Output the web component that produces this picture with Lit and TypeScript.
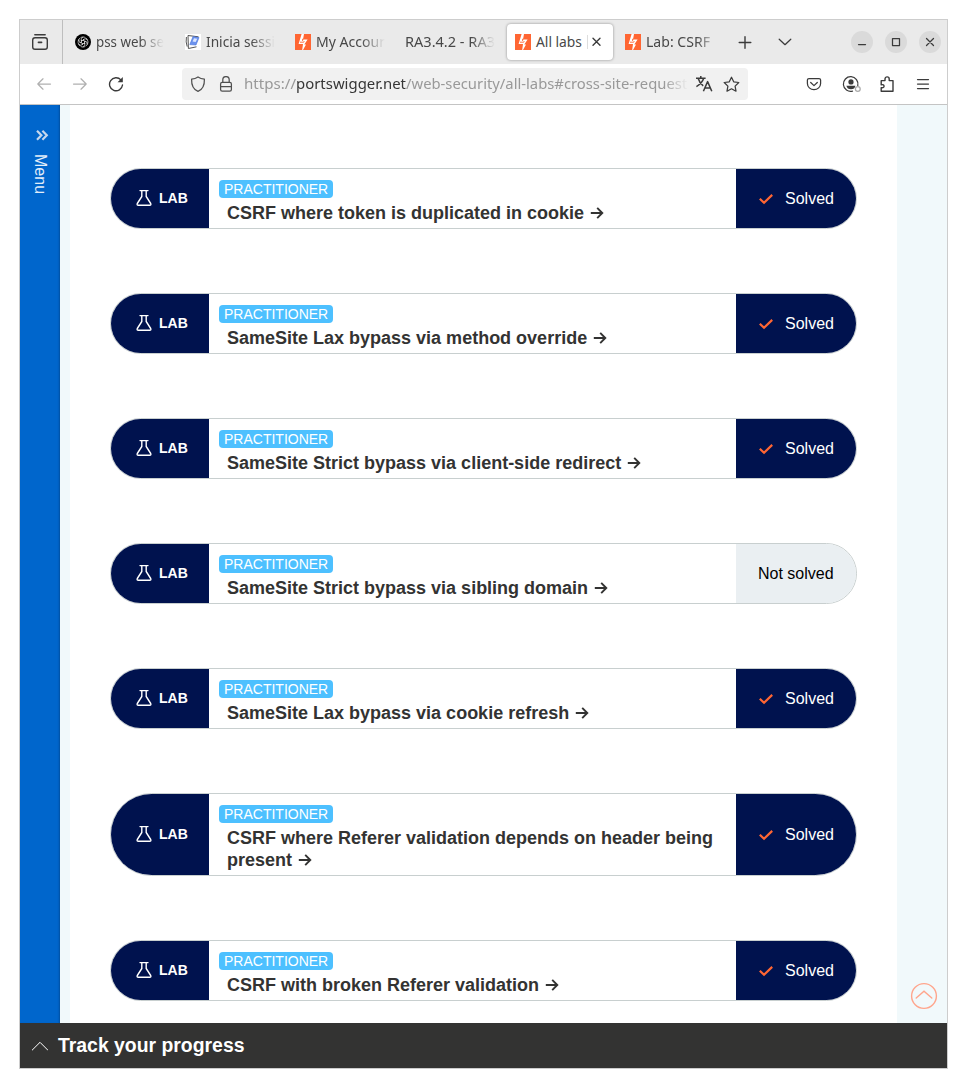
import { LitElement, html, svg, css } from "lit";
import { customElement, property } from "lit/decorators.js";

const bolt = html`<svg width="16" height="16" viewBox="0 0 16 16"><rect width="16" height="16" fill="#ff6633"/><path d="M6.6 0H9L8 5.6H12.6L9.3 10.4H11L8 16H7.2L8 9.9H3.6Z" fill="#fff"/><path d="M5 8.2H8.8L9.2 7.1M7.6 7V5H8.6" fill="none" stroke="#ff6633" stroke-width=".9"/></svg>`;

const gpt = html`<svg width="16" height="16" viewBox="0 0 16 16"><circle cx="8" cy="8" r="8" fill="#000"/><g fill="none" stroke="#fff" stroke-width=".65"><circle cx="8" cy="8" r="5" stroke-dasharray="4.6 .64"/>${[0, 60, 120, 180, 240, 300].map(
  (a) => svg`<path transform="rotate(${a} 8 8)" d="M6.2 7V4.4L8.2 3.2M8 6.2 10.6 7.7"/>`
)}</g></svg>`;

const moodle = html`<svg width="16" height="16" viewBox="0 0 16 16"><rect width="16" height="16" fill="#fff"/><path d="M3 1.5 13.5 2.8M3 1.5 3.4 14.5 11.5 12.8M1.4 3Q.5 8 2.2 12.6" fill="none" stroke="#555" stroke-width="1"/><path d="M8 2.6 14 3.6 11 11 4.8 10.6Z" fill="#6c92ee" stroke="#4571d8" stroke-width=".6"/><path d="M9 4.2 12.3 4.8 10.6 8 7.6 7.6Z" fill="#dbe6ff"/></svg>`;

const line = (w: number, h: number, body: unknown, color = "#3b3b3b", sw = 1.25) =>
  html`<svg width=${w} height=${h} viewBox="0 0 ${w} ${h}" fill="none" stroke=${color} stroke-width=${sw} stroke-linecap="round" stroke-linejoin="round">${body}</svg>`;

const label = (text: unknown, w: number, cls = "") =>
  html`<svg class="label ${cls}" width=${w} height="22"><text x="0" y="16" font-size="14.5" textLength=${w} lengthAdjust="spacingAndGlyphs">${text}</text></svg>`;

@customElement("lab-card")
class LabCard extends LitElement {
  @property() name = "";
  @property({ type: Boolean }) solved = false;

  static styles = css`
    :host { display: block; }
    .card { display: flex; border: 1px solid #c8cfcf; border-radius: 42px; overflow: hidden; background: #fff; color: #333332; }
    .kind { width: 98px; flex: none; display: flex; align-items: center; background: #00124e; color: #fff; font-weight: 700; font-size: 14px; box-sizing: border-box; padding: 0 0 2px 25px; gap: 7px; }
    .info { flex: 1; padding: 11px 10px 3px; min-width: 0; }
    .level { display: block; width: max-content; height: 18px; line-height: 18px; padding: 0 5px; border-radius: 4px; background: #4dc0ff; color: #fff; font-size: 14px; }
    .name { padding: 4px 0 0 8px; margin-bottom: 1px; font-size: 18px; line-height: 22px; font-weight: 700; }
    .name svg { vertical-align: -1px; margin-left: 1px; }
    .status { width: 120px; flex: none; box-sizing: border-box; display: flex; align-items: center; font-size: 16px; padding-left: 22px; background: #eaeff2; color: #000; }
    .done { background: #00124e; color: #fff; gap: 11px; }
  `;

  render() {
    return html`<div class="card">
      <div class="kind">
        ${line(16, 18, svg`<path d="M4 1.6H12M5.8 2V7.5L1.3 14.5Q.6 16.3 2.4 16.3H13.6Q15.4 16.3 14.7 14.5L10.2 7.5V2"/>`, "#fff", 1.4)}
        <span>LAB</span>
      </div>
      <div class="info">
        <span class="level">PRACTITIONER</span>
        <div class="name">${this.name} ${line(14, 14, svg`<path stroke-linecap="butt" stroke-linejoin="miter" d="M.8 7H12.2M7.2 1.9 12.3 7 7.2 12.1"/>`, "#333332", 1.9)}</div>
      </div>
      <div class="status ${this.solved ? "done" : ""}">
        ${this.solved ? line(16, 14, svg`<path stroke-linecap="butt" stroke-linejoin="miter" d="M1.8 6.8 6 10.7 14.2 2.9"/>`, "#ff6633", 2.2) : ""}
        <span>${this.solved ? "Solved" : "Not solved"}</span>
      </div>
    </div>`;
  }
}

@customElement("browser-chrome")
class BrowserChrome extends LitElement {
  static styles = css`
    :host { display: block; font-family: "Noto Sans", sans-serif; }
    svg { display: block; flex: none; }
    .tabs { height: 44px; background: #eaeaea; display: flex; align-items: center; }
    .view { width: 43px; height: 44px; border-right: 1px solid #bebebe; display: flex; align-items: center; padding-left: 11px; box-sizing: border-box; }
    .tab { width: 110px; height: 36px; box-sizing: border-box; padding-left: 10px; display: flex; align-items: center; gap: 5px; }
    .first { margin-left: 2px; }
    .active { width: 106px; margin: 0 2px; padding-left: 8px; background: #fff; border-radius: 4px; box-shadow: 0 0 3px rgba(0, 0, 0, 0.4); }
    .label { overflow: visible; fill: #484848; }
    .fade { -webkit-mask-image: linear-gradient(to right, #000 calc(100% - 24px), transparent); mask-image: linear-gradient(to right, #000 calc(100% - 24px), transparent); }
    .soft { -webkit-mask-image: linear-gradient(to right, #000 calc(100% - 14px), #0006); mask-image: linear-gradient(to right, #000 calc(100% - 14px), #0006); }
    .cut { border-left: 1px solid #ddd; height: 14px; }
    .close { margin-left: -2px; }
    .plus { margin-left: 13px; }
    .list { margin-left: 26px; }
    .win { display: flex; gap: 12px; margin-left: auto; padding-right: 6px; }
    .round { width: 22px; height: 22px; border-radius: 50%; background: #dadada; display: grid; place-items: center; }
    .bar { height: 40px; background: #fff; border-bottom: 1px solid #c4c4c4; display: flex; align-items: center; }
    .nav { display: flex; gap: 20px; padding-left: 16px; width: 146px; box-sizing: content-box; }
    .url { width: 566px; height: 32px; border-radius: 4px; background: #f1f1f1; display: flex; align-items: center; box-sizing: border-box; padding-left: 8px; }
    .url .lock { margin-left: 12px; margin-right: 10px; }
    .parts { display: flex; flex: none; width: 444px; overflow: hidden; }
    .parts svg { fill: #999; }
    .parts .host { fill: #363636; }
    .lang { margin-left: 7px; }
    .star { margin-left: 10px; }
    .tools { margin-left: auto; padding-right: 16px; display: flex; gap: 20px; align-items: center; }
    .user { margin-right: -3px; }
  `;

  render() {
    return html`
      <div class="tabs">
        <div class="view">${line(18, 18, svg`<path d="M3.8 1.7H14.2M1.7 7Q1.7 4.7 4 4.7H14Q16.3 4.7 16.3 7V14Q16.3 16.3 14 16.3H4Q1.7 16.3 1.7 14Z"/><path d="M7.4 9.4H10.6" stroke-width="1.6"/>`, "#3b3b3b", 1.4)}</div>
        <div class="tab first">${gpt}<span class="fade">${label("pss web se", 68)}</span></div>
        <div class="tab">${moodle}<span class="fade">${label("Inicia sessi", 69)}</span></div>
        <div class="tab">${bolt}<span class="fade">${label("My Accour", 69)}</span></div>
        <div class="tab"><span class="fade">${label("RA3.4.2 - RA3", 90)}</span></div>
        <div class="tab active">${bolt}${label("All labs", 46)}<span class="cut"></span><span class="close">${line(12, 12, svg`<path d="M2 2.3 9 9.3M9 2.3 2 9.3"/>`, "#3b3b3b", 1.4)}</span></div>
        <div class="tab">${bolt}<span class="soft">${label("Lab: CSRF", 64)}</span></div>
        <span class="plus">${line(14, 14, svg`<path d="M1.2 7.5H12.8M7 1.7V13.3"/>`, "#3b3b3b", 1.4)}</span>
        <span class="list">${line(14, 14, svg`<path d="M1.2 4.2 7 9.7 12.8 4.2"/>`)}</span>
        <div class="win">
          <span class="round">${line(10, 10, svg`<path d="M1.5 7.5H8.5"/>`)}</span>
          <span class="round">${line(10, 10, svg`<rect x="1.5" y="1.5" width="7" height="7" rx="0"/>`)}</span>
          <span class="round">${line(10, 10, svg`<path d="M1.5 1.5 8.5 8.5M8.5 1.5 1.5 8.5"/>`)}</span>
        </div>
      </div>
      <div class="bar">
        <div class="nav">
          ${line(16, 16, svg`<path d="M14.5 8H1.8M7 2.8 1.8 8 7 13.2"/>`, "#b0b0b0")}
          ${line(16, 16, svg`<path d="M1.5 8H14.2M9 2.8 14.2 8 9 13.2"/>`, "#b0b0b0")}
          ${line(16, 16, svg`<path d="M12.9 3.9A6.5 6.5 0 1 0 14.5 9"/><path d="M14.8 1V6.2H9.6Z" fill="#3b3b3b" stroke="none"/>`, "#3b3b3b", 1.4)}
        </div>
        <div class="url">
          ${line(16, 16, svg`<path d="M8 .9Q5.3 2.8 1.6 3.2C1.4 9.2 3.7 13.6 8 15.3 12.3 13.6 14.6 9.2 14.4 3.2Q10.7 2.8 8 .9Z"/>`, "#505050")}
          <span class="lock">${line(16, 16, svg`<rect x="2.6" y="6.4" width="10.8" height="8.8" rx="1.6"/><path d="M4.8 6.4V3.8A3.2 3.2 0 0 1 11.2 3.8V6.4M2.8 10.6H13.2"/>`, "#505050")}</span>
          <div class="parts fade">
            ${label("https://", 52)}${label("portswigger.net", 110, "host")}${label("/web-security/all-labs#cross-site-request-", 286)}
          </div>
          <span class="lang">${line(18, 18, svg`<path stroke-linecap="butt" d="M1 3.2H10.6M5.8 1V3.2M8.6 3.5Q7 8.4 1.4 11.6M3.2 3.5Q4.5 8 8.2 10.8M8.4 16.2 12.6 6.6 16.8 16.2M9.8 13H15.4"/>`, "#3b3b3b", 1.5)}</span>
          <span class="star">${line(17, 17, svg`<path d="M8.5 1.2 10.7 5.8 15.8 6.5 12.1 10.1 13 15.2 8.5 12.8 4 15.2 4.9 10.1 1.2 6.5 6.3 5.8Z"/>`)}</span>
        </div>
        <div class="tools">
          ${line(16, 16, svg`<path d="M3 2.5H13Q14.6 2.5 14.6 4.1V7.5A6.6 6.2 0 0 1 1.4 7.5V4.1Q1.4 2.5 3 2.5ZM4.7 6.5 8 9.6 11.3 6.5"/>`)}
          <span class="user">${line(20, 18, svg`<path d="M10.5 16.1A7.3 7.3 0 1 1 15.8 10.6"/><circle cx="9" cy="6.9" r="2.6" fill="#3b3b3b" stroke="none"/><path d="M4.4 10.8H13.4Q12.8 14.3 9 14.3 5.2 14.3 4.4 10.8Z" fill="#3b3b3b" stroke="none"/><circle cx="15.8" cy="13.9" r="2.4" fill="#fff" stroke="#aaa"/>`)}</span>
          ${line(16, 16, svg`<path d="M2.2 15.2V11.6C6 12.8 6 7.6 2.2 8.8V4.6H6V3A2.1 2.1 0 0 1 10.2 3V4.6H14V15.2Z"/>`, "#3b3b3b", 1.4)}
          ${line(16, 16, svg`<path d="M2.5 3.5H13.5M2.5 8H13.5M2.5 12.5H13.5"/>`)}
        </div>
      </div>`;
  }
}

@customElement("app-root")
class AppRoot extends LitElement {
  labs = [
    { name: "CSRF where token is duplicated in cookie", solved: true },
    { name: "SameSite Lax bypass via method override", solved: true },
    { name: "SameSite Strict bypass via client-side redirect", solved: true },
    { name: "SameSite Strict bypass via sibling domain", solved: false },
    { name: "SameSite Lax bypass via cookie refresh", solved: true },
    { name: "CSRF where Referer validation depends on header being present", solved: true },
    { name: "CSRF with broken Referer validation", solved: true },
  ];

  static styles = css`
    :host { display: block; box-sizing: border-box; height: 1088px; padding: 19px; background: #fff; font-family: "Liberation Sans", Arial, sans-serif; }
    .window { box-sizing: border-box; height: 1050px; border: 1px solid #cdcdcd; display: flex; flex-direction: column; }
    .page { flex: 1; min-height: 0; display: flex; background: #f1f9fb; overflow: hidden; }
    .side { width: 40px; flex: none; background: #0066cc; box-shadow: inset -2px 0 2px -1px #004f9f; color: #e3eefa; display: flex; flex-direction: column; align-items: center; padding: 24px 0 0 4px; box-sizing: border-box; }
    .menu { writing-mode: vertical-rl; font-size: 16px; line-height: 18px; margin-top: 12px; margin-right: 4px; }
    .side svg { flex: none; }
    .content { width: 827px; flex: none; margin-left: 10px; box-sizing: border-box; background: #fff; padding: 63px 40px 0; display: flex; flex-direction: column; gap: 64px; }
    .rail { flex: 1; display: flex; flex-direction: column; align-items: center; justify-content: flex-end; padding: 0 0 13px 4px; }
    .foot { height: 45px; flex: none; box-sizing: border-box; background: #333332; color: #fff; font-weight: 700; font-size: 19.4px; display: flex; align-items: center; gap: 10px; padding: 0 0 1px 12px; }
    .foot svg { margin-top: 1px; }
  `;

  render() {
    return html`<div class="window">
      <browser-chrome></browser-chrome>
      <div class="page">
        <div class="side">
          ${line(14, 13, svg`<path stroke-linecap="butt" stroke-linejoin="miter" d="M2 1.8 6.4 6.3 2 10.8M7.4 1.8 11.8 6.3 7.4 10.8"/>`, "#c7d8ec", 2.2)}
          <span class="menu">Menu</span>
        </div>
        <div class="content">${this.labs.map((l) => html`<lab-card .name=${l.name} .solved=${l.solved}></lab-card>`)}</div>
        <div class="rail">${line(28, 28, svg`<circle cx="14" cy="14" r="12.4"/><path stroke-linejoin="miter" d="M6.2 16 14 9.2 21.8 16"/>`, "#ffa58c", 1.4)}</div>
      </div>
      <div class="foot">${line(16, 10, svg`<path d="M0 9.3 8 1.3 16 9.3"/>`, "#fff", 1)}<span>Track your progress</span></div>
    </div>`;
  }
}
